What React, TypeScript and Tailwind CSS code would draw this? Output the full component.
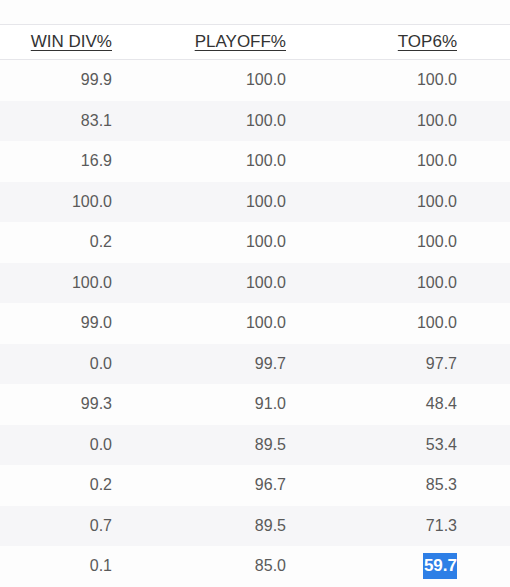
const ROWS: [string, string, string][] = [
  ['99.9', '100.0', '100.0'],
  ['83.1', '100.0', '100.0'],
  ['16.9', '100.0', '100.0'],
  ['100.0', '100.0', '100.0'],
  ['0.2', '100.0', '100.0'],
  ['100.0', '100.0', '100.0'],
  ['99.0', '100.0', '100.0'],
  ['0.0', '99.7', '97.7'],
  ['99.3', '91.0', '48.4'],
  ['0.0', '89.5', '53.4'],
  ['0.2', '96.7', '85.3'],
  ['0.7', '89.5', '71.3'],
  ['0.1', '85.0', '59.7'],
];

export default function App() {
  return (
    <div
      className="w-[510px] h-[587px] overflow-hidden bg-[#fdfdfd]"
      style={{ fontFamily: '"Liberation Sans", Arial, sans-serif' }}
    >
      <div className="h-[24px]" />
      <div className="flex items-center h-[36px] border-t border-b border-[#e6e6ea] text-[17px] text-[#333] bg-white">
        <div className="w-[112px] text-right underline underline-offset-[3px]">WIN DIV%</div>
        <div className="w-[174px] text-right underline underline-offset-[3px]">PLAYOFF%</div>
        <div className="w-[171px] text-right underline underline-offset-[3px]">TOP6%</div>
      </div>
      {ROWS.map((r, i) => {
        const last = i === ROWS.length - 1;
        return (
          <div
            key={i}
            className={
              'flex items-center h-[40.5px] text-[16px] text-[#5a5a5a] ' +
              (i % 2 === 1 ? 'bg-[#f6f6f8]' : 'bg-[#fdfdfd]')
            }
          >
            <div className="w-[112px] text-right">{r[0]}</div>
            <div className="w-[174px] text-right">{r[1]}</div>
            <div className="w-[171px] text-right">
              {last ? (
                <span className="inline-block bg-[#2e7fe6] text-white font-bold text-[17px] leading-[26px] pl-[1px]">
                  {r[2]}
                </span>
              ) : (
                r[2]
              )}
            </div>
          </div>
        );
      })}
    </div>
  );
}
